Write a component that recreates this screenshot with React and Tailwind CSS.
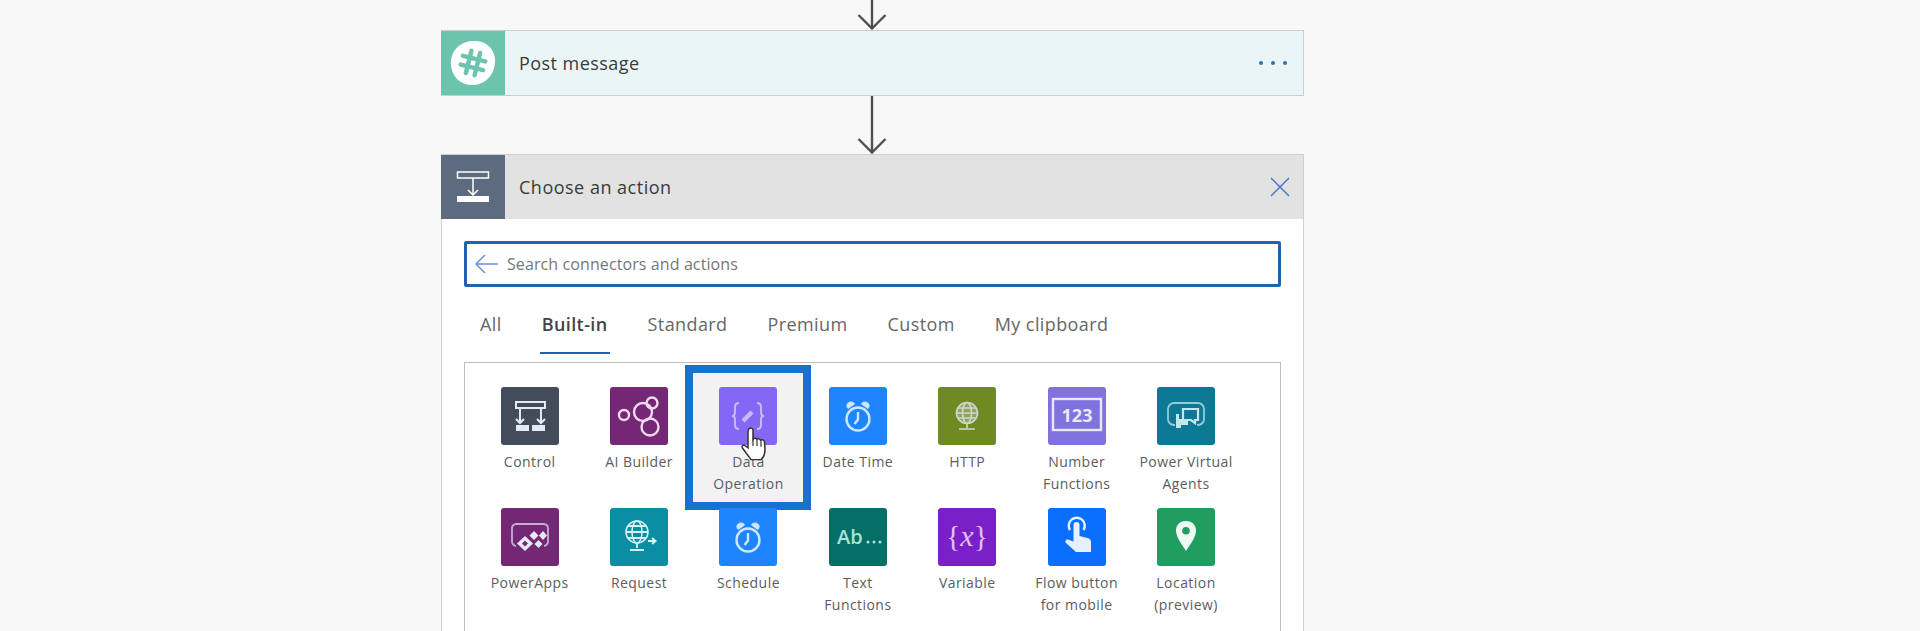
const FONT = "font-['Open_Sans','Noto_Sans',sans-serif]";

function Arrow({ height }) {
  return (
    <div className="flex justify-center pr-[2px]" style={{ height }}>
      <svg width="30" height={height} viewBox={`0 0 30 ${height}`} fill="none" stroke="#505050" strokeWidth="2.4">
        <path d={`M15 0V${height - 1}`} />
        <path d={`M1.5 ${height - 15}L15 ${height - 1.5}L28.5 ${height - 15}`} />
      </svg>
    </div>
  );
}

const stroke = { fill: 'none', stroke: 'currentColor', strokeWidth: 2 };

const clock = (
  <g fill="none" stroke="#cfe6ff" strokeWidth="2.4">
    <circle cx="29" cy="32" r="11.500" />
    <path d="M29 25v7.500l-3.500 4.500" />
    <path d="M19 21.500c-2.500-3-.5-6.500 3-6.500 1.500 0 3 .8 3.500 2zM39 21.500c2.500-3 .5-6.500-3-6.500-1.500 0-3 .8-3.500 2z" fill="#cfe6ff" strokeWidth="1" />
  </g>
);

const icons = {
  control: (
    <g {...stroke}>
      <rect x="15" y="15" width="29" height="6" />
      <path d="M19 21V35M40 21V35M15 32l4 4 4-4M36 32l4 4 4-4" />
      <rect x="15" y="38" width="13" height="6" fill="currentColor" stroke="none" />
      <rect x="31" y="38" width="13" height="6" fill="currentColor" stroke="none" />
    </g>
  ),
  ai: (
    <g fill="none" stroke="#f3d9f0" strokeWidth="2.4">
      <circle cx="14" cy="28" r="5" />
      <circle cx="33" cy="25" r="9" />
      <circle cx="42" cy="16" r="5.500" />
      <circle cx="40" cy="40" r="8.500" />
    </g>
  ),
  data: (
    <g fill="none" stroke="currentColor" strokeWidth="2" opacity="0.65">
      <path d="M20 16c-3 0-4 1-4 4v5c0 2-1 4-3 4 2 0 3 2 3 4v5c0 3 1 4 4 4" />
      <path d="M38 16c3 0 4 1 4 4v5c0 2 1 4 3 4-2 0-3 2-3 4v5c0 3-1 4-4 4" />
      <path d="M24 34l9-9" strokeWidth="4.500" />
    </g>
  ),
  clock,
  http: (
    <g fill="none" stroke="currentColor" strokeWidth="1.600" opacity="0.8">
      <circle cx="29" cy="26" r="10.500" fill="currentColor" fillOpacity="0.35" />
      <ellipse cx="29" cy="26" rx="4.500" ry="10.500" />
      <path d="M18.500 26h21M20 21h18M20 31h18M29 37v4M21 42h16" />
    </g>
  ),
  number: (
    <g>
      <rect x="5" y="12" width="48" height="31" fill="none" stroke="currentColor" strokeWidth="2.400" />
      <text x="29" y="34.500" textAnchor="middle" fontSize="18" fontWeight="700" fill="currentColor" fontFamily="'Open Sans',sans-serif">123</text>
    </g>
  ),
  pva: (
    <g fill="none" stroke="#c5e6ee" strokeWidth="1.800">
      <path d="M18 38h-1a6 6 0 0 1-6-6V22a6 6 0 0 1 6-6h24a6 6 0 0 1 6 6v10a6 6 0 0 1-6 6h-1" opacity="0.75" />
      <path d="M26 22h15v11h-3v3l-4-3h-8z" strokeWidth="2.200" />
      <path d="M19 27v14h5v-3h7v-6H22v-5z" fill="#c5e6ee" stroke="none" />
    </g>
  ),
  powerapps: (
    <g>
      <path d="M15 38c-1.500 0-4-2-4-4V20c0-2 2-4 4-4h28c2 0 4 2 4 4v14c0 2-2.500 4-4 4" fill="none" stroke="currentColor" strokeWidth="1.800" opacity="0.7" />
      <path d="M24 28l8 7.500-8 7.500-8-7.500zM24 32.500l-3 3 3 3 3-3z" fill="currentColor" fillRule="evenodd" />
      <path d="M33 23l4.500 4.500L33 32l-4.500-4.500zM42 23l4 4.500-4 4.500-4-4.500zM37.500 32l4 4-4 4-4-4z" fill="currentColor" />
    </g>
  ),
  request: (
    <g fill="none" stroke="#d5f3f7" strokeWidth="1.500">
      <circle cx="27" cy="24" r="11" />
      <ellipse cx="27" cy="24" rx="5" ry="11" />
      <path d="M16 24h22M18 18h18M18 30h18M27 35v5M20 42h14" strokeWidth="1.800" />
      <path d="M38 33h7M42 30l3.500 3-3.500 3" strokeWidth="2" />
    </g>
  ),
  text: (
    <g fill="#a5e2dc" fontFamily="'Open Sans',sans-serif">
      <text x="8" y="36" fontSize="20" fontWeight="600">Ab</text>
      <circle cx="39" cy="34" r="1.500" />
      <circle cx="45" cy="34" r="1.500" />
      <circle cx="51" cy="34" r="1.500" />
    </g>
  ),
  variable: (
    <text x="29" y="38" textAnchor="middle" fontSize="30" fill="#e3bdf5" fontFamily="'Liberation Serif',serif">
      {'{'}
      <tspan fontStyle="italic">x</tspan>
      {'}'}
    </text>
  ),
  flow: (
    <g fill="#e6f0ff">
      <path d="M22 22a8 8 0 1 1 13.500 0" fill="none" stroke="#e6f0ff" strokeWidth="2.400" />
      <path d="M25.500 17a3 3 0 0 1 6 0v11l8 2c2 .5 3.500 2 3.500 4v10H28l-10-9c-1.500-1.500 0-4 2-3.500l5.500 2z" />
    </g>
  ),
  location: (
    <path
      d="M29 13c-7 0-10 5-10 9.500 0 7 6 14 10 20.500 4-6.500 10-13.500 10-20.500C39 18 36 13 29 13zm0 6a3.800 3.800 0 1 1 0 7.600 3.800 3.800 0 0 1 0-7.600z"
      fill="#eef9f2"
      fillRule="evenodd"
    />
  ),
};

const tiles = [
  { label: 'Control', bg: 'bg-[#444c5c]', icon: 'control' },
  { label: 'AI Builder', bg: 'bg-[#742774]', icon: 'ai' },
  { label: 'Data Operation', bg: 'bg-[#8468f5]', icon: 'data', active: true },
  { label: 'Date Time', bg: 'bg-[#1f85ff]', icon: 'clock' },
  { label: 'HTTP', bg: 'bg-[#708a23]', icon: 'http' },
  { label: 'Number Functions', bg: 'bg-[#8172dd]', icon: 'number' },
  { label: 'Power Virtual Agents', bg: 'bg-[#0b7a94]', icon: 'pva' },
  { label: 'PowerApps', bg: 'bg-[#742774]', icon: 'powerapps' },
  { label: 'Request', bg: 'bg-[#0b8ea3]', icon: 'request' },
  { label: 'Schedule', bg: 'bg-[#1f85ff]', icon: 'clock' },
  { label: 'Text Functions', bg: 'bg-[#056f67]', icon: 'text' },
  { label: 'Variable', bg: 'bg-[#7a20c9]', icon: 'variable' },
  { label: 'Flow button for mobile', bg: 'bg-[#0a6fff]', icon: 'flow' },
  { label: 'Location (preview)', bg: 'bg-[#1f9e5f]', icon: 'location' },
];

function Tile({ label, bg, icon, active }) {
  return (
    <div className="relative flex flex-col items-center h-[121px]">
      {active && (
        <div className="absolute left-[-9px] top-[-22px] w-[126px] h-[145px] border-[8px] border-[#1a70cd] bg-[#f2f2f2]" />
      )}
      <div className={`relative w-[58px] h-[58px] rounded-[3px] text-[#e6eaf6] ${bg}`}>
        <svg width="58" height="58" viewBox="0 0 58 58">{icons[icon]}</svg>
      </div>
      <div className="relative mt-[6px] w-[96px] text-center text-[14px] leading-[21.5px] tracking-[0.45px] text-[#5c5c5c]">
        {label}
      </div>
      {active && (
        <svg className="absolute left-[47px] top-[39px]" width="28" height="36" viewBox="0 0 28 38" preserveAspectRatio="none">
          <path
            d="M8 3c1.500-1.500 4-1 4 1.500V14c1-1.500 3-1.500 4 0 1.500-1 3-.5 3.500 1 1.500-1 3.500-.5 4 1.500l.5 8c0 5-1.500 9-4 11H10L2 24c-1.500-2-1-4 1-4l4 3V5z"
            fill="#fff"
            stroke="#333"
            strokeWidth="1.500"
          />
          <path d="M12 14v7M16 14v7M20 15v7" stroke="#333" strokeWidth="1.200" />
        </svg>
      )}
    </div>
  );
}

export default function App() {
  const tabs = ['All', 'Built-in', 'Standard', 'Premium', 'Custom', 'My clipboard'];

  return (
    <div className={`w-full h-[631px] overflow-hidden bg-[#f8f8f8] ${FONT}`}>
      <div className="ml-[441px] w-[863px]">
        <Arrow height={30} />

        {/* Post message */}
        <div className="flex items-center h-[66px] bg-[#e9f6f5] border border-[#c8d0cf] pr-[16px]">
          <div className="flex items-center justify-center w-[64px] h-full -ml-px bg-[#6cc4ae]">
            <svg width="46" height="46" viewBox="0 0 46 46">
              <path d="M22 1c12-1 21 5 23 17 1 14-7 25-20 27C12 46 2 38 1 25 0 12 9 2 22 1z" fill="#fff" />
              <g transform="rotate(14 23 23)" stroke="#6cc4ae" strokeWidth="4.500" strokeLinecap="round">
                <path d="M18.500 11.500v23M27.500 11.500v23M11.500 18.500h23M11.500 27.500h23" />
              </g>
            </svg>
          </div>
          <div className="ml-[14px] flex-1 text-[18px] tracking-[0.45px] text-[#3a3a3a]">Post message</div>
          <div className="flex gap-[8px]">
            <span className="w-[4px] h-[4px] rounded-full bg-[#2f6fb0]" />
            <span className="w-[4px] h-[4px] rounded-full bg-[#2f6fb0]" />
            <span className="w-[4px] h-[4px] rounded-full bg-[#2f6fb0]" />
          </div>
        </div>

        <Arrow height={58} />

        {/* Choose an action */}
        <div className="bg-white border border-[#cfcfcf] h-[520px]">
          <div className="flex items-center h-[64px] bg-[#e2e2e2] pr-[13px]">
            <div className="flex items-center justify-center w-[64px] h-full -ml-px bg-[#5c6b7f]">
              <svg width="34" height="34" viewBox="0 0 34 34" fill="none" stroke="#fff" strokeWidth="1.500">
                <rect x="1.500" y="2" width="31" height="6" />
                <path d="M17 8v16M12 20l5 5 5-5" />
                <rect x="1" y="26" width="32" height="6" fill="#fff" stroke="none" />
              </svg>
            </div>
            <div className="ml-[14px] flex-1 text-[18px] tracking-[0.5px] text-[#3a3a3a]">Choose an action</div>
            <svg width="20" height="20" viewBox="0 0 20 20" stroke="#4a74d0" strokeWidth="1.500">
              <path d="M1 1l18 18M19 1L1 19" />
            </svg>
          </div>

          <div className="px-[22px] pt-[22px]">
            {/* search */}
            <div className="flex items-center h-[46px] border-[3px] border-[#1f62ad] rounded-[2px] pl-[8px]">
              <svg width="24" height="20" viewBox="0 0 24 20" fill="none" stroke="#6f8fd8" strokeWidth="1.500">
                <path d="M23 10H2M10 1l-9 9 9 9" />
              </svg>
              <span className="ml-[8px] text-[16px] tracking-[0.1px] text-[#777]">Search connectors and actions</span>
            </div>

            {/* tabs */}
            <div className="flex h-[75px] pl-[16px] gap-[40px] text-[18px] tracking-[0.4px] text-[#666]">
              {tabs.map((t) =>
                t === 'Built-in' ? (
                  <div key={t} className="relative pt-[24px] font-semibold text-[#444]">
                    {t}
                    <div className="absolute left-[-2px] right-[-2px] top-[65px] h-[2px] bg-[#1f62ad]" />
                  </div>
                ) : (
                  <div key={t} className="pt-[24px]">{t}</div>
                )
              )}
            </div>

            {/* connectors */}
            <div className="border border-[#bdbdbd] pt-[24px] pl-[10px] h-[300px]">
              <div className="grid grid-cols-[repeat(7,109.4px)]">
                {tiles.map((t) => (
                  <Tile key={t.label} {...t} />
                ))}
              </div>
            </div>
          </div>
        </div>
      </div>
    </div>
  );
}
